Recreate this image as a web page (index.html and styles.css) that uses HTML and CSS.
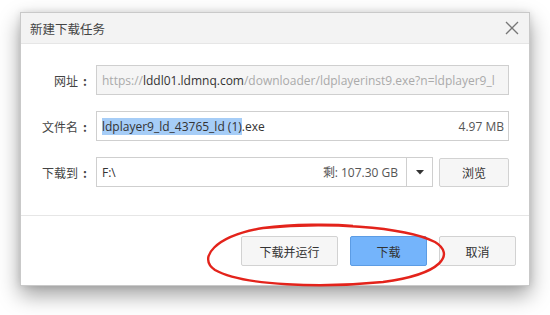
FILE: index.html
```html
<!DOCTYPE html>
<html lang="zh-CN">
<head>
<meta charset="utf-8">
<link rel="stylesheet" href="styles.css">
</head>
<body>
<div class="dialog">
  <div class="titlebar">
    <span class="title">新建下载任务</span>
    <svg class="close" width="14" height="14" viewBox="0 0 14 14"><path d="M1 1L13 13M13 1L1 13" stroke="#777" stroke-width="1.3" fill="none"/></svg>
  </div>
  <div class="content">
    <div class="row">
      <span class="label">网址<span class="colon">:</span></span>
      <div class="field url"><span class="dim">https://</span><span class="host">lddl01.ldmnq.com</span><span class="dim">/downloader/ldplayerinst9.exe?n=ldplayer9_l</span></div>
    </div>
    <div class="row">
      <span class="label">文件名<span class="colon">:</span></span>
      <div class="field name"><span class="sel">ldplayer9_ld_43765_ld (1)</span><span>.exe</span><span class="grow"></span><span class="size">4.97 MB</span></div>
    </div>
    <div class="row">
      <span class="label">下载到<span class="colon">:</span></span>
      <div class="field path"><span class="pathtext">F:\</span><span class="grow"></span><span class="size">剩: 107.30 GB</span><span class="drop"><svg width="8" height="5" viewBox="0 0 8 5"><path d="M0 0H8L4 4.5Z" fill="#333"/></svg></span></div>
      <button class="btn browse">浏览</button>
    </div>
  </div>
  <div class="footer">
    <button class="btn">下载并运行</button>
    <button class="btn primary">下载</button>
    <button class="btn">取消</button>
    <svg class="mark" width="250" height="66" viewBox="0 0 250 66"><path d="M60 6 C 120 0, 200 4, 232 20 C 252 32, 240 52, 180 60 C 120 66, 40 64, 12 48 C -6 36, 12 14, 60 6 C 90 2, 130 2, 150 4" stroke="#e3231b" stroke-width="2.4" fill="none"/></svg>
  </div>
</div>
</body>
</html>
```

FILE: styles.css
```css
* { box-sizing: border-box; }
html, body { height: 315px; }
body {
  margin: 0;
  padding: 12px 20px 0;
  background: #fff;
  font-family: "Noto Sans CJK SC", "Noto Sans", sans-serif;
  font-size: 12px;
  color: #333;
  overflow: hidden;
}
.dialog {
  width: 510px;
  height: 274px;
  border: 1px solid #c9c9c9;
  background: #fff;
  box-shadow: 0 9px 20px rgba(0,0,0,0.38), 0 0 7px rgba(0,0,0,0.1);
  display: flex;
  flex-direction: column;
  position: relative;
}
.titlebar {
  height: 31px;
  background: #f3f3f3;
  border-bottom: 1px solid #e6e6e6;
  display: flex;
  align-items: center;
  justify-content: space-between;
  padding: 0 10px 0 9px;
}
.title { font-size: 12.5px; color: #444; }
.close { display: block; }
.content {
  padding: 21px 20px 0 0;
  display: flex;
  flex-direction: column;
  gap: 16px;
  height: 172px;
  border-bottom: 1px solid #e6e6e6;
}
.row {
  display: flex;
  align-items: center;
  height: 30px;
}
.label {
  width: 75px;
  text-align: right;
  padding-right: 9px;
  color: #444;
  flex: none;
}
.colon {
  margin-left: 5px;
  font-weight: bold;
}
.field {
  height: 30px;
  border: 1px solid #cfcfcf;
  display: flex;
  align-items: center;
  padding: 0 4px 0 5px;
  font-family: "Open Sans", "Noto Sans", sans-serif;
  font-size: 12px;
  white-space: nowrap;
  overflow: hidden;
  flex: 1;
}
.url { background: #f5f5f5; color: #aaa; }
.url .host { color: #333; }
.name { color: #333; }
.sel { background: #a6cdf7; }
.grow { flex: 1; }
.size { color: #555; }
.path { flex: none; width: 337px; padding-right: 0; }
.path .size { margin-right: 8px; }
.drop {
  width: 26px;
  height: 28px;
  border-left: 1px solid #cfcfcf;
  display: flex;
  align-items: center;
  justify-content: center;
}
.btn {
  font-family: "Noto Sans CJK SC", sans-serif;
  font-size: 12px;
  color: #333;
  height: 30px;
  width: 77px;
  background: #f6f6f6;
  border: 1px solid #d2d2d2;
  border-radius: 2px;
  padding: 0;
}
.browse { margin-left: 6px; width: 70px; height: 29px; }
.footer {
  flex: 1;
  display: flex;
  justify-content: flex-end;
  align-items: flex-start;
  gap: 12px;
  padding: 20px 13px 0 0;
  position: relative;
}
.footer .btn:first-child { width: 97px; }
.primary { background: #74b4fb; border-color: #5c9ce4; }
.mark {
  position: absolute;
  left: 182px;
  top: 6px;
}
```
